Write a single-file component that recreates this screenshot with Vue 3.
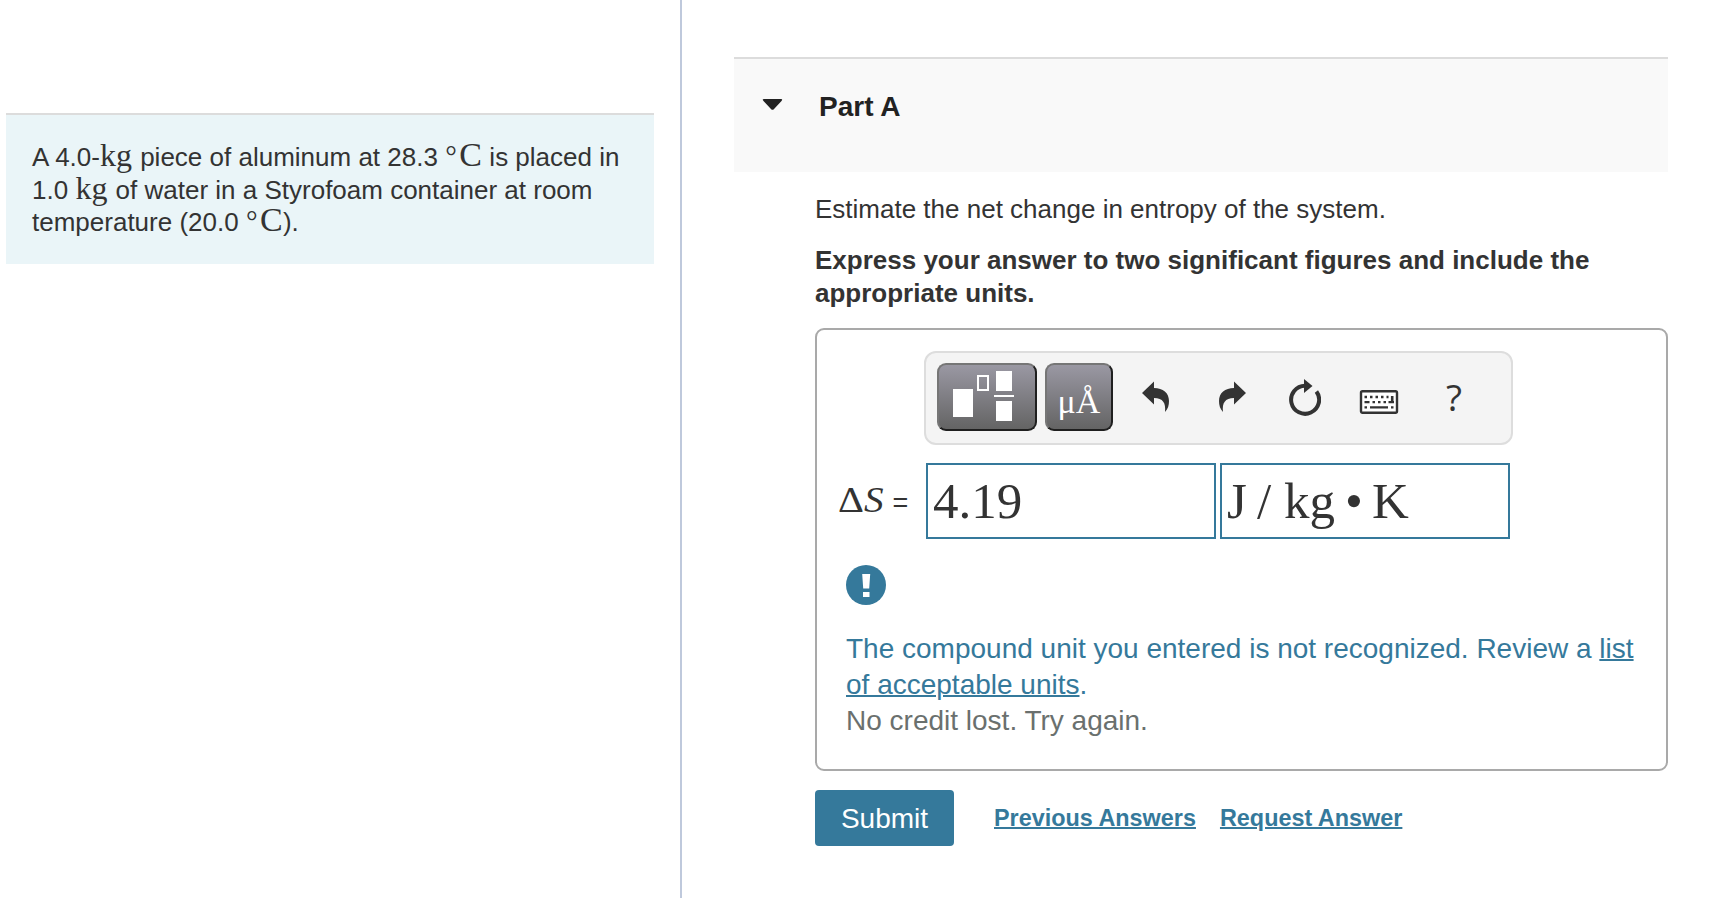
<template>
  <div class="page">
    <aside class="problem">
      <div class="problem-card">
        <div class="row">A 4.0-<span class="math kg">kg</span> piece of aluminum at 28.3 <span class="math deg">°</span><span class="math cel">C</span> is placed in</div>
        <div class="row">1.0 <span class="math kg">kg</span> of water in a Styrofoam container at room</div>
        <div class="row">temperature (20.0 <span class="math deg">°</span><span class="math cel">C</span>).</div>
      </div>
    </aside>

    <main class="content">
      <header class="part-header">
        <svg class="caret" width="22" height="13" viewBox="0 0 22 13">
          <path d="M1.5 1h18q1.5 0.6 0 2l-7.700 8.200q-1.300 1-2.600 0L1.500 3q-1.500-1.400 0-2z" fill="#222" />
        </svg>
        <h2>Part A</h2>
      </header>

      <section class="part-body">
        <p class="question">Estimate the net change in entropy of the system.</p>
        <p class="instructions">Express your answer to two significant figures and include the<br />appropriate units.</p>

        <div class="answer-box">
          <div class="toolbar">
            <button class="tool templates" type="button" aria-label="Templates">
              <svg width="96" height="64" viewBox="2 2 96 64">
                <g fill="#fff">
                  <rect x="16" y="26" width="20" height="28" />
                  <rect x="59" y="8" width="16" height="20" />
                  <rect x="57" y="32" width="20" height="2" />
                  <rect x="59" y="38" width="16" height="20" />
                </g>
                <rect x="41" y="13" width="10" height="14" fill="none" stroke="#fff" stroke-width="2" />
              </svg>
            </button>
            <button class="tool units" type="button">μÅ</button>
            <svg class="undo" width="28" height="40" viewBox="0 0 28 40">
              <path d="M0 16L12 4.500V11C21 11 27 16 27 24C27 28 26 32 23 35C24 26 21 21 12 21V27.500Z" fill="#333" />
            </svg>
            <svg class="redo" width="28" height="40" viewBox="0 0 28 40">
              <path d="M27 16L15 4.500V11C6 11 0 16 0 24C0 28 1 32 4 35C3 26 6 21 15 21V27.500Z" fill="#333" />
            </svg>
            <svg class="reset" width="32" height="40" viewBox="0 0 32 40">
              <path d="M16 8.800A14 14 0 1 0 27.400 14.500" fill="none" stroke="#333" stroke-width="4" />
              <path d="M15 2L23.500 9L15 16Z" fill="#333" />
            </svg>
            <svg class="keyboard" width="40" height="40" viewBox="0 0 40 40">
              <rect x="2" y="14.200" width="36" height="21.600" rx="1.500" fill="#fff" stroke="#333" stroke-width="2.400" />
              <path d="M5.500 20h2.500m3 0h2.500m3 0h2.500m3 0h2.500m3 0h2M5.500 25.200h5m3 0h2.500m3 0h2.500m3 0h2.500m2.500 0h5.500M5.500 30.300h2.500m3 0h18m3 0h2.500" fill="none" stroke="#333" stroke-width="2.300" />
              <path d="M33.200 19v7" stroke="#333" stroke-width="2.600" />
            </svg>
            <span class="help">?</span>
          </div>

          <div class="answer-row">
            <span class="label"><span class="delta">Δ</span><i>S</i><span class="equals">=</span></span>
            <div class="field">4.19</div>
            <div class="field">
              <span class="joule">J</span><span class="slash">/</span><span class="kilo">kg</span><span class="dot">•</span><span>K</span>
            </div>
          </div>

          <div class="feedback">
            <svg width="40" height="40" viewBox="0 0 40 40">
              <circle cx="20" cy="20" r="20" fill="#35799b" />
              <path d="M16.200 9h8l-1 14.500h-6z M17 27h6.500v5H17z" fill="#fff" />
            </svg>
            <p class="message">The compound unit you entered is not recognized. Review a <a href="#">list<br />of acceptable units</a>.</p>
            <p class="credit">No credit lost. Try again.</p>
          </div>
        </div>

        <div class="actions">
          <button class="submit" type="button">Submit</button>
          <a href="#">Previous Answers</a>
          <a href="#">Request Answer</a>
        </div>
      </section>
    </main>
  </div>
</template>

<script setup>
</script>

<style>
body {
  margin: 0;
  background: #fff;
}
</style>

<style scoped>
.page {
  display: flex;
  height: 898px;
  overflow: hidden;
  color: #333;
  font-family: "Liberation Sans", Arial, sans-serif;
  font-size: 26px;
  line-height: 32.5px;
}
p, h2 {
  margin: 0;
}
button {
  font-family: inherit;
  padding: 0;
}
.problem {
  flex: 0 0 682px;
  padding: 113px 26px 0 6px;
  box-sizing: border-box;
  border-right: 2px solid #bfc9dc;
}
.problem-card {
  height: 151px;
  padding: 26px 26px 0;
  box-sizing: border-box;
  border-top: 2px solid #dcdcdc;
  background: #eaf5f8;
  white-space: nowrap;
}
.row {
  height: 32.5px;
}
.math {
  display: inline-block;
  font-family: "Liberation Serif", "Times New Roman", serif;
  font-size: 32px;
  line-height: 24px;
}
.kg {
  width: 33px;
}
.deg {
  width: 14px;
  font-size: 29px;
}
.cel {
  width: 23px;
  font-size: 34px;
}
.content {
  padding: 57px 52px 0;
  flex: 1;
}
.part-header {
  display: flex;
  height: 115px;
  box-sizing: border-box;
  border-top: 2px solid #dcdcdc;
  background: #f9f9f9;
}
.caret {
  margin: 39px 0 0 28px;
}
.part-header h2 {
  margin: 31px 0 0 35px;
  color: #222;
  font-size: 28px;
  line-height: 34px;
}
.part-body {
  padding-left: 81px;
}
.question {
  padding-top: 21px;
  white-space: nowrap;
}
.instructions {
  margin-top: 18.5px;
  font-weight: bold;
  white-space: nowrap;
}
.answer-box {
  margin-top: 19px;
  height: 443px;
  box-sizing: border-box;
  border: 2px solid #a9a9a9;
  border-radius: 9px;
}
.toolbar {
  display: flex;
  align-items: center;
  width: 589px;
  height: 94px;
  margin: 21px 0 0 107px;
  padding: 0 0 2px 11px;
  box-sizing: border-box;
  border: 2px solid #ddd;
  border-radius: 12px;
  background: #f4f4f4;
}
.tool {
  height: 68px;
  box-sizing: border-box;
  border: 2px solid;
  border-color: #767676 #1f1f1f #1f1f1f #767676;
  border-radius: 9px;
  background: linear-gradient(#9a98a3, #646464);
  color: #fff;
}
.tool svg {
  display: block;
}
.templates {
  width: 100px;
}
.units {
  width: 68px;
  margin-left: 8px;
  padding-top: 9px;
  font-family: "Liberation Serif", serif;
  font-size: 34px;
  line-height: 40px;
}
.undo {
  margin-left: 29px;
}
.redo {
  margin-left: 49px;
}
.reset {
  margin-left: 42px;
}
.keyboard {
  margin-left: 38px;
}
.help {
  margin-left: 47px;
  font-family: "Open Sans", sans-serif;
  font-size: 37px;
  line-height: 40px;
}
.answer-row {
  display: flex;
  gap: 4px;
  height: 76px;
  margin: 18px 0 0 21px;
}
.label {
  width: 84px;
  font-family: "Liberation Serif", serif;
  font-size: 35px;
  line-height: 76px;
  white-space: nowrap;
}
.delta {
  display: inline-block;
  width: 26px;
  transform: scaleX(1.15);
  transform-origin: left;
}
.label i {
  display: inline-block;
  transform: scaleX(1.12);
  transform-origin: left;
}
.equals {
  margin-left: 11px;
  font-family: "Liberation Sans", Arial, sans-serif;
  font-size: 27px;
}
.field {
  width: 290px;
  height: 76px;
  padding-left: 5px;
  box-sizing: border-box;
  border: 2px solid #35799b;
  font-family: "Liberation Serif", serif;
  font-size: 51px;
  line-height: 72px;
  white-space: nowrap;
}
.field span {
  display: inline-block;
}
.joule {
  width: 30px;
}
.slash {
  width: 27px;
}
.kilo {
  width: 61px;
}
.dot {
  width: 27px;
}
.feedback {
  margin: 26px 0 0 29px;
  font-size: 28px;
  line-height: 36px;
  white-space: nowrap;
}
.feedback svg {
  display: block;
  margin-bottom: 26px;
}
.message {
  color: #35799b;
}
.credit {
  color: #6a706e;
}
a {
  color: #35799b;
  text-decoration-thickness: 2px;
}
.actions {
  display: flex;
  align-items: center;
  margin-top: 19px;
}
.actions a {
  margin-right: 24px;
  font-size: 23.4px;
  font-weight: bold;
}
.submit {
  width: 139px;
  height: 56px;
  margin-right: 40px;
  padding-top: 2px;
  border: 0;
  border-radius: 4px;
  background: #35799b;
  color: #fff;
  font-size: 28px;
}
</style>
